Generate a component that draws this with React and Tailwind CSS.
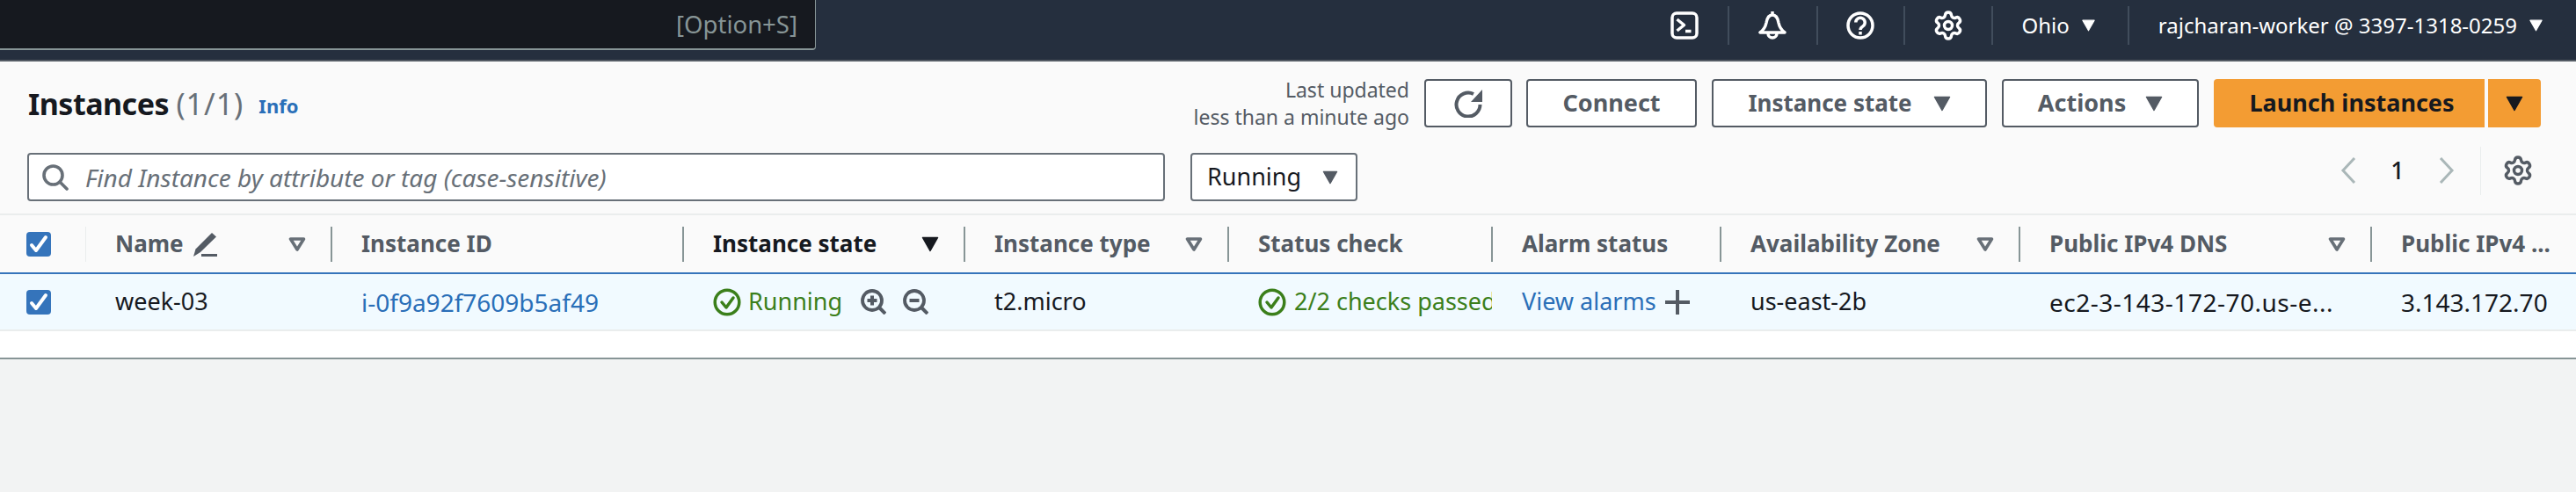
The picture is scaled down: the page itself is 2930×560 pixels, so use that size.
import React from 'react';
import { Settings } from 'lucide-react';

const font = { fontFamily: '"Noto Sans", "Open Sans", sans-serif' };

const Caret = ({ className = '' }) => (
    <svg viewBox="0 0 20 18" className={className} fill="currentColor" stroke="currentColor" strokeWidth="1.5" strokeLinejoin="round">
        <path d="M1.5 1.5h17L10 16.5z" />
    </svg>
);

const FilterCaret = () => (
    <svg viewBox="0 0 20 16" className="w-[20px] h-[16px] text-[#687078]" fill="none" stroke="currentColor" strokeWidth="3.6" strokeLinejoin="round">
        <path d="M2.5 2h15L10 14z" />
    </svg>
);

const CheckBox = () => (
    <div className="w-[28px] h-[28px] rounded-[4px] bg-[#3574bb] flex items-center justify-center">
        <svg viewBox="0 0 28 28" className="w-[28px] h-[28px]" fill="none" stroke="#fff" strokeWidth="4" strokeLinecap="round" strokeLinejoin="round">
            <path d="M6 15l5 6 11-15" />
        </svg>
    </div>
);

const StatusIcon = () => (
    <svg viewBox="0 0 32 32" className="w-[32px] h-[32px] shrink-0" fill="none" stroke="#3b7f1b" strokeWidth="3.5" strokeLinecap="round" strokeLinejoin="round">
        <circle cx="16" cy="16" r="13.8" />
        <path d="M10 16l5 6 8-11" />
    </svg>
);

const Terminal = () => (
    <svg viewBox="0 0 32 32" className="w-[32px] h-[32px]" fill="none" stroke="#fff" strokeWidth="3.5" strokeLinejoin="round">
        <rect x="2" y="2" width="28" height="28" rx="5" />
        <path d="M7.5 9l8 6.5-8 6.5" />
        <path d="M17 22.5h6.5" />
    </svg>
);

const Bell = () => (
    <svg viewBox="0 0 32 32" className="w-[32px] h-[32px]" fill="none" stroke="#fff" strokeWidth="3.5" strokeLinejoin="round">
        <path d="M2 24h28c-4-3-6-6-7-11-1-6-3-9-7-9s-6 3-7 9c-1 5-3 8-7 11z" />
        <path d="M16 0v4" />
        <path d="M11 25a5 5 0 0 0 10 0" />
    </svg>
);

const Help = () => (
    <svg viewBox="0 0 32 32" className="w-[32px] h-[32px]" fill="none" stroke="#fff" strokeWidth="3.5">
        <circle cx="16" cy="16" r="14" />
        <path d="M10.8 12.5a5.2 5.2 0 1 1 8 4.4c-1.9 1.1-2.8 1.8-2.8 4" />
        <path d="M16 23v3.5" />
    </svg>
);

const ZoomGlass = ({ plus }) => (
    <svg viewBox="0 0 29 29" className="w-[29px] h-[29px]" fill="none" stroke="#545b64" strokeWidth="3.8">
        <circle cx="13" cy="13" r="11" />
        <path d="M21 21l7 7" strokeWidth="4" />
        <path d="M7.5 13h11" strokeWidth="4" />
        {plus && <path d="M13 7.5v11" strokeWidth="4" />}
    </svg>
);

const Divider = () => <div className="w-[2px] h-[40px] bg-[#879596] shrink-0"></div>;

const NavDivider = () => <div className="w-[2px] h-[44px] bg-[#414d5c] shrink-0"></div>;

const columns = [
    { label: 'Name', width: 'w-[280px]', filter: true, pencil: true },
    { label: 'Instance ID', width: 'w-[400px]' },
    { label: 'Instance state', width: 'w-[320px]', sorted: true },
    { label: 'Instance type', width: 'w-[300px]', filter: true },
    { label: 'Status check', width: 'w-[300px]' },
    { label: 'Alarm status', width: 'w-[260px]' },
    { label: 'Availability Zone', width: 'w-[340px]', filter: true },
    { label: 'Public IPv4 DNS', width: 'w-[400px]', filter: true },
];

const App = () => {
    return (
        <div style={font} className="w-[2930px] h-[560px] overflow-hidden bg-[#f2f3f3] flex flex-col text-[27px] text-[#16191f]">
            {/* Top nav */}
            <div className="h-[70px] shrink-0 bg-[#252f3e] border-b-[2px] border-[#545b64] flex items-start">
                <div className="w-[928px] h-[57px] bg-[#16191f] border-r-[1px] border-b-[2px] border-[#879596] rounded-br-[4px] flex items-center justify-end pr-[20px] text-[#879596] text-[27.5px]">
                    [Option+S]
                </div>
                <div className="ml-auto h-[57px] flex items-center text-white text-[24px] whitespace-nowrap">
                    <Terminal />
                    <div className="ml-[33px]"><NavDivider /></div>
                    <div className="ml-[33px]"><Bell /></div>
                    <div className="ml-[34px]"><NavDivider /></div>
                    <div className="ml-[32px]"><Help /></div>
                    <div className="ml-[33px]"><NavDivider /></div>
                    <Settings size={36} strokeWidth={2.3} className="ml-[31px]" />
                    <div className="ml-[31px]"><NavDivider /></div>
                    <span className="ml-[33px]">Ohio</span>
                    <Caret className="w-[17px] h-[14px] ml-[13px]" />
                    <div className="ml-[36px]"><NavDivider /></div>
                    <span className="ml-[33px]">rajcharan-worker @ 3397-1318-0259</span>
                    <Caret className="w-[17px] h-[14px] ml-[13px] mr-[37px]" />
                </div>
            </div>

            {/* Header + filter */}
            <div className="h-[173px] shrink-0 bg-[#fafafa] flex flex-col">
                <div className="h-[55px] mt-[20px] shrink-0 pl-[32px] pr-[40px] flex items-center whitespace-nowrap">
                    <h1 className="text-[34px] font-bold leading-none tracking-[-0.5px]">
                        Instances <span className="font-normal text-[#687078] tracking-[1px]">(1/1)</span>
                    </h1>
                    <span className="ml-[17px] mt-[6px] text-[22px] font-bold text-[#2a6fb8]">Info</span>
                    <div className="ml-auto text-right text-[23px] leading-[31px] text-[#545b64] mr-[17px]">
                        <div>Last updated</div>
                        <div>less than a minute ago</div>
                    </div>
                    <button className="w-[100px] h-[55px] bg-white border-[2px] border-[#545b64] rounded-[4px] flex items-center justify-center text-[#545b64]">
                        <svg viewBox="0 0 32 32" className="w-[32px] h-[32px]" fill="none" stroke="currentColor" strokeWidth="4">
                            <path d="M22 5a13.5 13.5 0 1 0 7.5 12" />
                            <path d="M32 0v14H19z" fill="currentColor" stroke="none" />
                        </svg>
                    </button>
                    <button className="ml-[16px] w-[194px] h-[55px] bg-white border-[2px] border-[#545b64] rounded-[4px] font-bold text-[#545b64]">Connect</button>
                    <button className="ml-[17px] w-[313px] h-[55px] bg-white border-[2px] border-[#545b64] rounded-[4px] font-bold text-[#545b64] text-[26px] flex items-center justify-center gap-[24px]">
                        Instance state <Caret className="w-[20px] h-[18px]" />
                    </button>
                    <button className="ml-[17px] w-[224px] h-[55px] bg-white border-[2px] border-[#545b64] rounded-[4px] font-bold text-[#545b64] flex items-center justify-center gap-[22px]">
                        Actions <Caret className="w-[20px] h-[18px]" />
                    </button>
                    <button className="ml-[17px] w-[308px] h-[55px] bg-[#f39c33] rounded-l-[4px] font-bold pl-[6px]">Launch instances</button>
                    <button className="ml-[4px] w-[60px] h-[55px] bg-[#f39c33] rounded-r-[4px] flex items-center justify-center">
                        <Caret className="w-[20px] h-[18px]" />
                    </button>
                </div>
                <div className="h-[55px] mt-[29px] shrink-0 pl-[31px] flex items-center">
                    <div className="w-[1294px] h-[55px] bg-white border-[2px] border-[#687078] rounded-[4px] flex items-center pl-[15px]">
                        <svg viewBox="0 0 30 30" className="w-[30px] h-[30px] shrink-0 text-[#687078]" fill="none" stroke="currentColor" strokeWidth="3.6" strokeLinecap="round">
                            <circle cx="12.5" cy="12.5" r="10.5" />
                            <path d="M20 20l8 8" />
                        </svg>
                        <span className="ml-[19px] italic text-[#687078] text-[28px]">Find Instance by attribute or tag (case-sensitive)</span>
                    </div>
                    <div className="ml-[29px] w-[190px] h-[55px] bg-white border-[2px] border-[#687078] rounded-[4px] flex items-center pl-[17px] gap-[23px]">
                        Running <Caret className="w-[20px] h-[16px] text-[#545b64]" />
                    </div>
                    <div className="ml-auto mb-[15px] flex items-center h-[55px] text-[#aab7b8]">
                        <svg viewBox="0 0 18 30" className="w-[18px] h-[30px]" fill="none" stroke="currentColor" strokeWidth="3"><path d="M16 1L3 15l13 14" /></svg>
                        <span className="w-[94px] text-center text-[#16191f] font-medium">1</span>
                        <svg viewBox="0 0 18 30" className="w-[18px] h-[30px]" fill="none" stroke="currentColor" strokeWidth="3"><path d="M2 1l13 14L2 29" /></svg>
                        <div className="ml-[29px] w-[1px] h-[55px] bg-[#eaeded]"></div>
                        <Settings size={36} strokeWidth={2.3} className="ml-[24px] mr-[48px] text-[#545b64]" />
                    </div>
                </div>
            </div>

            {/* Table */}
            <div className="h-[166px] shrink-0 bg-white border-b-[2px] border-[#879596] flex flex-col">
                <div className="h-[67px] shrink-0 bg-[#fafafa] border-t-[2px] border-[#eaeded] flex items-center font-bold text-[#545b64] text-[26px] whitespace-nowrap">
                    <div className="w-[98px] shrink-0 h-[40px] flex items-center justify-between pl-[30px]">
                        <CheckBox />
                        <div className="w-[1px] h-[40px] bg-[#eaeded]"></div>
                    </div>
                    {columns.map(col => (
                        <div key={col.label} className={`${col.width} shrink-0 h-[40px] flex items-center pl-[33px]`}>
                            <span className={col.sorted ? 'text-[#16191f]' : ''}>{col.label}</span>
                            {col.pencil && (
                                <svg viewBox="0 0 28 28" className="ml-[10px] w-[28px] h-[28px]" fill="currentColor">
                                    <path d="M22 1l5 4.5L9 23l-8 5 2.5-8.5z" />
                                    <path d="M10 25h18v3H10z" />
                                </svg>
                            )}
                            <div className="ml-auto flex items-center gap-[28px]">
                                {col.filter && <FilterCaret />}
                                {col.sorted && <Caret className="w-[20px] h-[18px] text-[#16191f]" />}
                                <Divider />
                            </div>
                        </div>
                    ))}
                    <div className="pl-[33px]">Public IPv4 ...</div>
                </div>
                <div className="h-[67px] shrink-0 bg-[#f1faff] border-t-[2px] border-t-[#3574bb] border-b-[2px] border-b-[#eaeded] flex items-center whitespace-nowrap">
                    <div className="w-[98px] shrink-0 pl-[30px]"><CheckBox /></div>
                    <div className="w-[280px] shrink-0 pl-[33px]">week-03</div>
                    <div className="w-[400px] shrink-0 pl-[33px] text-[#2a6fb8] text-[28px]">i-0f9a92f7609b5af49</div>
                    <div className="w-[320px] shrink-0 pl-[33px] flex items-center text-[#3b7f1b]">
                        <StatusIcon />
                        <span className="ml-[8px]">Running</span>
                        <div className="ml-[21px] flex items-center gap-[19px]">
                            <ZoomGlass plus />
                            <ZoomGlass />
                        </div>
                    </div>
                    <div className="w-[300px] shrink-0 pl-[33px]">t2.micro</div>
                    <div className="w-[299px] mr-[1px] shrink-0 pl-[33px] flex items-center text-[#3b7f1b] overflow-hidden">
                        <StatusIcon />
                        <span className="ml-[9px]">2/2 checks passed</span>
                    </div>
                    <div className="w-[260px] shrink-0 pl-[33px] flex items-center text-[#2a6fb8]">
                        View alarms
                        <svg viewBox="0 0 28 28" className="ml-[10px] w-[28px] h-[28px]" stroke="#545b64" strokeWidth="4"><path d="M0 14h28M14 0v28" /></svg>
                    </div>
                    <div className="w-[340px] shrink-0 pl-[33px]">us-east-2b</div>
                    <div className="w-[400px] shrink-0 pl-[33px] text-[28px] tracking-[0.5px]">ec2-3-143-172-70.us-e...</div>
                    <div className="pl-[33px] text-[28px]">3.143.172.70</div>
                </div>
            </div>
        </div>
    );
};

export default App;
